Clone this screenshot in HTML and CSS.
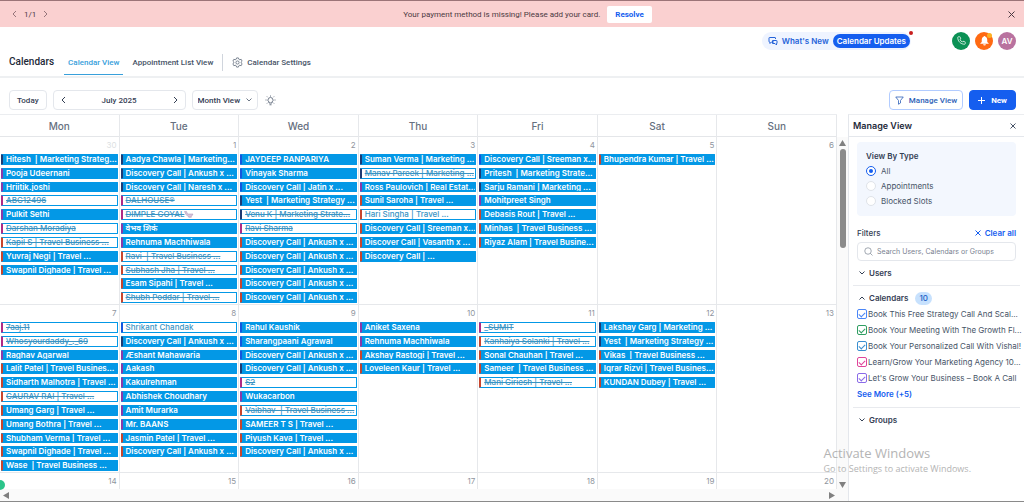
FILE: index.html
```html
<!DOCTYPE html>
<html lang="en">
<head>
<meta charset="UTF-8">
<meta name="viewport" content="width=device-width, initial-scale=1.0">
<title>Calendars</title>
<link rel="stylesheet" href="styles.css">
</head>
<body>

<div class="banner">
    <div class="banner-pager">
        <button aria-label="Previous"><svg width="5" height="8" viewBox="0 0 5 8"><path d="M4 1 1 4l3 3"/></svg></button>
        <span>1/1</span>
        <button aria-label="Next"><svg width="5" height="8" viewBox="0 0 5 8"><path d="M1 1l3 3-3 3"/></svg></button>
    </div>
    <div class="banner-message">
        <span>Your payment method is missing! Please add your card.</span>
        <button class="resolve">Resolve</button>
    </div>
    <button class="banner-close" aria-label="Close"><svg width="7" height="7" viewBox="0 0 7 7"><path d="M.5.5l6 6M6.5.5l-6 6"/></svg></button>
</div>

<header class="header">
    <div class="topbar">
        <div class="whats-new">
            <svg width="10" height="10" viewBox="0 0 20 20"><path d="M12 12H7l-3 3v-3H3a1 1 0 0 1-1-1V4a1 1 0 0 1 1-1h11a1 1 0 0 1 1 1v2M9 9h8a1 1 0 0 1 1 1v5h-1v3l-3-3H9z"/></svg>
            <a href="#">What's New</a>
            <a href="#" class="updates">Calendar Updates<span class="dot"></span></a>
        </div>
        <button class="round phone" aria-label="Call"><svg width="9" height="9" viewBox="0 0 24 24"><path d="M22 17v3a2 2 0 0 1-2 2C10 22 2 14 2 4a2 2 0 0 1 2-2h3a2 2 0 0 1 2 2l1 4-2 2a16 16 0 0 0 6 6l2-2 4 1a2 2 0 0 1 2 2z"/></svg></button>
        <button class="round bell" aria-label="Notifications"><svg width="11" height="11" viewBox="0 0 24 24"><path d="M12 2a2 2 0 0 0-2 2c-3 1-4 4-4 7v4l-3 3v1h18v-1l-3-3v-4c0-3-1-6-4-7a2 2 0 0 0-2-2zM9 20a3 3 0 0 0 6 0z"/></svg><span class="bell-dot"></span></button>
        <button class="round avatar">AV</button>
    </div>
    <nav class="tabs">
        <h1>Calendars</h1>
        <a href="#" class="tab active">Calendar View</a>
        <a href="#" class="tab">Appointment List View</a>
        <a href="#" class="settings"><svg width="11" height="11" viewBox="0 0 24 24"><path d="M10 2h4l1 3 2 1 3-1 2 4-2 2v2l2 2-2 4-3-1-2 1-1 3h-4l-1-3-2-1-3 1-2-4 2-2v-2L2 9l2-4 3 1 2-1z"/><circle cx="12" cy="12" r="3.5"/></svg>Calendar Settings</a>
    </nav>
</header>

<div class="toolbar">
    <button class="btn today">Today</button>
    <div class="btn month-nav">
        <button aria-label="Previous month"><svg width="5" height="8" viewBox="0 0 5 8"><path d="M4 1 1 4l3 3"/></svg></button>
        <span>July 2025</span>
        <button aria-label="Next month"><svg width="5" height="8" viewBox="0 0 5 8"><path d="M1 1l3 3-3 3"/></svg></button>
    </div>
    <div class="select">
        <select class="btn" aria-label="View"><option>Month View</option><option>Week View</option><option>Day View</option></select>
        <svg width="6" height="4" viewBox="0 0 6 4"><path d="M.5.5 3 3 5.5.5"/></svg>
    </div>
    <button class="tips" aria-label="Tips"><svg width="11" height="11" viewBox="0 0 22 22"><path d="M8 16v-2a5 5 0 1 1 6 0v2zM9 19.500h4M11 1v2M1 10h2M19 10h2M4 3l1.500 1.500M18 3l-1.500 1.500M4 17l1.500-1.500M18 17l-1.500-1.500"/></svg></button>
    <button class="btn manage"><svg width="9" height="9" viewBox="0 0 18 18"><path d="M1.500 2h15l-5.500 7v5l-4 2.500V9z"/></svg>Manage View</button>
    <button class="btn new"><svg width="7" height="7" viewBox="0 0 7 7"><path d="M3.500 0v7M0 3.500h7"/></svg>New</button>
</div>

<div class="content">
    <main class="calendar">
        <div class="week-head">
            <div>Mon</div><div>Tue</div><div>Wed</div><div>Thu</div><div>Fri</div><div>Sat</div><div>Sun</div>
        </div>
        <div class="month">
            <div class="weeks">
                <div class="day other">
                    <span class="date">30</span>
                    <div class="events">
                        <a href="#" class="event navy">Hitesh  | Marketing Strateg...</a>
                        <a href="#" class="event purple">Pooja Udeernani</a>
                        <a href="#" class="event purple">Hriitik.joshi</a>
                        <a href="#" class="event pink cancelled">ABC12496</a>
                        <a href="#" class="event purple">Pulkit Sethi</a>
                        <a href="#" class="event pink cancelled">Darshan Moradiya</a>
                        <a href="#" class="event red cancelled">Kapil S | Travel Business ...</a>
                        <a href="#" class="event red">Yuvraj Negi | Travel ...</a>
                        <a href="#" class="event red">Swapnil Dighade | Travel ...</a>
                    </div>
                </div>
                <div class="day">
                    <span class="date">1</span>
                    <div class="events">
                        <a href="#" class="event navy">Aadya Chawla | Marketing...</a>
                        <a href="#" class="event navy">Discovery Call | Ankush x ...</a>
                        <a href="#" class="event navy">Discovery Call | Naresh x ...</a>
                        <a href="#" class="event pink cancelled">DALHOUSE®</a>
                        <a href="#" class="event pink cancelled">DIMPLE GOYAL<svg class="bird" width="10" height="8" viewBox="0 0 20 16"><path d="M1 3h4l2 5h11l-3 5H8L4 9zM9 15h6"/></svg></a>
                        <a href="#" class="event purple">वेभव शिर्के</a>
                        <a href="#" class="event purple">Rehnuma Machhiwala</a>
                        <a href="#" class="event red cancelled">Ravi  | Travel Business ...</a>
                        <a href="#" class="event red cancelled">Subhash Jha | Travel ...</a>
                        <a href="#" class="event red">Esam Sipahi | Travel ...</a>
                        <a href="#" class="event red cancelled">Shubh Poddar | Travel ...</a>
                    </div>
                </div>
                <div class="day">
                    <span class="date">2</span>
                    <div class="events">
                        <a href="#" class="event blue">JAYDEEP RANPARIYA</a>
                        <a href="#" class="event blue">Vinayak Sharma</a>
                        <a href="#" class="event blue">Discovery Call | Jatin x ...</a>
                        <a href="#" class="event navy">Yest  | Marketing Strategy ...</a>
                        <a href="#" class="event navy cancelled">Venu K | Marketing Strate...</a>
                        <a href="#" class="event pink cancelled">Ravi Sharma</a>
                        <a href="#" class="event red">Discovery Call | Ankush x ...</a>
                        <a href="#" class="event red">Discovery Call | Ankush x ...</a>
                        <a href="#" class="event red">Discovery Call | Ankush x ...</a>
                        <a href="#" class="event red">Discovery Call | Ankush x ...</a>
                        <a href="#" class="event red">Discovery Call | Ankush x ...</a>
                    </div>
                </div>
                <div class="day">
                    <span class="date">3</span>
                    <div class="events">
                        <a href="#" class="event navy">Suman Verma | Marketing ...</a>
                        <a href="#" class="event navy cancelled">Manav Pareek | Marketing ...</a>
                        <a href="#" class="event purple">Ross Paulovich | Real Estat...</a>
                        <a href="#" class="event red">Sunil Saroha | Travel ...</a>
                        <a href="#" class="event red pending">Hari Singha | Travel ...</a>
                        <a href="#" class="event red">Discovery Call | Sreeman x...</a>
                        <a href="#" class="event red">Discover Call | Vasanth x ...</a>
                        <a href="#" class="event red">Discovery Call | ...</a>
                    </div>
                </div>
                <div class="day">
                    <span class="date">4</span>
                    <div class="events">
                        <a href="#" class="event blue">Discovery Call | Sreeman x...</a>
                        <a href="#" class="event navy">Pritesh  | Marketing Strate...</a>
                        <a href="#" class="event navy">Sarju Ramani | Marketing ...</a>
                        <a href="#" class="event purple">Mohitpreet Singh</a>
                        <a href="#" class="event red">Debasis Rout | Travel ...</a>
                        <a href="#" class="event red">Minhas  | Travel Business ...</a>
                        <a href="#" class="event red">Riyaz Alam | Travel Busine...</a>
                    </div>
                </div>
                <div class="day">
                    <span class="date">5</span>
                    <div class="events">
                        <a href="#" class="event red">Bhupendra Kumar | Travel ...</a>
                    </div>
                </div>
                <div class="day"><span class="date">6</span></div>

                <div class="day">
                    <span class="date">7</span>
                    <div class="events">
                        <a href="#" class="event pink cancelled">7aaj.11</a>
                        <a href="#" class="event pink cancelled">Whosyourdaddy_._69</a>
                        <a href="#" class="event purple">Raghav Agarwal</a>
                        <a href="#" class="event red">Lalit Patel | Travel Busines...</a>
                        <a href="#" class="event red">Sidharth Malhotra | Travel ...</a>
                        <a href="#" class="event red cancelled">GAURAV RAI | Travel ...</a>
                        <a href="#" class="event red">Umang Garg | Travel ...</a>
                        <a href="#" class="event red">Umang Bothra | Travel ...</a>
                        <a href="#" class="event red">Shubham Verma | Travel ...</a>
                        <a href="#" class="event red">Swapnil Dighade | Travel ...</a>
                        <a href="#" class="event red">Wase  | Travel Business ...</a>
                    </div>
                </div>
                <div class="day">
                    <span class="date">8</span>
                    <div class="events">
                        <a href="#" class="event blue pending">Shrikant Chandak</a>
                        <a href="#" class="event navy">Discovery Call | Ankush x ...</a>
                        <a href="#" class="event purple">Æshant Mahawaria</a>
                        <a href="#" class="event purple">Aakash</a>
                        <a href="#" class="event purple">Kakulrehman</a>
                        <a href="#" class="event purple">Abhishek Choudhary</a>
                        <a href="#" class="event purple">Amit Murarka</a>
                        <a href="#" class="event purple">Mr. BAANS</a>
                        <a href="#" class="event red">Jasmin Patel | Travel ...</a>
                        <a href="#" class="event red">Discovery Call | Ankush x ...</a>
                    </div>
                </div>
                <div class="day">
                    <span class="date">9</span>
                    <div class="events">
                        <a href="#" class="event blue">Rahul Kaushik</a>
                        <a href="#" class="event blue">Sharangpaani Agrawal</a>
                        <a href="#" class="event blue">Discovery Call | Ankush x ...</a>
                        <a href="#" class="event navy">Discovery Call | Ankush x ...</a>
                        <a href="#" class="event pink cancelled">S2</a>
                        <a href="#" class="event purple">Wukacarbon</a>
                        <a href="#" class="event red cancelled">Vaibhav  | Travel Business ...</a>
                        <a href="#" class="event red">SAMEER T S | Travel ...</a>
                        <a href="#" class="event red">Piyush Kava | Travel ...</a>
                        <a href="#" class="event red">Discovery Call | Ankush x ...</a>
                    </div>
                </div>
                <div class="day">
                    <span class="date">10</span>
                    <div class="events">
                        <a href="#" class="event purple">Aniket Saxena</a>
                        <a href="#" class="event purple">Rehnuma Machhiwala</a>
                        <a href="#" class="event red">Akshay Rastogi | Travel ...</a>
                        <a href="#" class="event red">Loveleen Kaur | Travel ...</a>
                    </div>
                </div>
                <div class="day">
                    <span class="date">11</span>
                    <div class="events">
                        <a href="#" class="event pink cancelled">_SUMIT</a>
                        <a href="#" class="event red cancelled">Kanhaiya Solanki | Travel ...</a>
                        <a href="#" class="event red">Sonal Chauhan | Travel ...</a>
                        <a href="#" class="event red">Sameer  | Travel Business ...</a>
                        <a href="#" class="event red cancelled">Mani Giriesh | Travel ...</a>
                    </div>
                </div>
                <div class="day">
                    <span class="date">12</span>
                    <div class="events">
                        <a href="#" class="event navy">Lakshay Garg | Marketing ...</a>
                        <a href="#" class="event navy">Yest  | Marketing Strategy ...</a>
                        <a href="#" class="event red">Vikas  | Travel Business ...</a>
                        <a href="#" class="event red">Iqrar Rizvi | Travel Busines...</a>
                        <a href="#" class="event red">KUNDAN Dubey | Travel ...</a>
                    </div>
                </div>
                <div class="day"><span class="date">13</span></div>

                <div class="day"><span class="date">14</span></div>
                <div class="day"><span class="date">15</span></div>
                <div class="day"><span class="date">16</span></div>
                <div class="day"><span class="date">17</span></div>
                <div class="day"><span class="date">18</span></div>
                <div class="day"><span class="date">19</span></div>
                <div class="day"><span class="date">20</span></div>
            </div>
            <div class="scroll-y">
                <svg width="7" height="6" viewBox="0 0 7 6"><path d="M3.500 0 7 6H0z"/></svg>
                <div class="thumb"></div>
                <svg width="7" height="6" viewBox="0 0 7 6"><path d="M0 0h7L3.500 6z"/></svg>
            </div>
        </div>
        <div class="scroll-x">
            <svg width="6" height="7" viewBox="0 0 6 7"><path d="M6 0v7L0 3.500z"/></svg>
            <svg width="6" height="7" viewBox="0 0 6 7"><path d="M0 0v7l6-3.500z"/></svg>
        </div>
    </main>

    <aside class="panel">
        <div class="panel-head">
            <h2>Manage View</h2>
            <button aria-label="Close panel"><svg width="6" height="6" viewBox="0 0 6 6"><path d="M.5.5l5 5M5.500.5l-5 5"/></svg></button>
        </div>
        <fieldset class="view-type">
            <legend>View By Type</legend>
            <label><input type="radio" name="type" checked>All</label>
            <label><input type="radio" name="type">Appointments</label>
            <label><input type="radio" name="type">Blocked Slots</label>
        </fieldset>
        <div class="filters-head">
            <h3>Filters</h3>
            <button><svg width="6" height="6" viewBox="0 0 6 6"><path d="M.5.5l5 5M5.500.5l-5 5"/></svg>Clear all</button>
        </div>
        <div class="search">
            <svg width="9" height="9" viewBox="0 0 18 18"><circle cx="8" cy="8" r="6.500"/><path d="M13 13l4 4"/></svg>
            <input type="text" aria-label="Search" placeholder="Search Users, Calendars or Groups">
        </div>
        <section class="group">
            <button class="group-head"><svg width="6" height="4" viewBox="0 0 6 4"><path d="M.5.5 3 3 5.500.5"/></svg>Users</button>
        </section>
        <section class="group calendars">
            <button class="group-head"><svg width="6" height="4" viewBox="0 0 6 4"><path d="M.5 3.500 3 1l2.500 2.500"/></svg>Calendars<span class="count">10</span></button>
            <label><input type="checkbox" class="c-blue" checked><span>Book This Free Strategy Call And Scal...</span></label>
            <label><input type="checkbox" class="c-green" checked><span>Book Your Meeting With The Growth Fl...</span></label>
            <label><input type="checkbox" class="c-sky" checked><span>Book Your Personalized Call With Vishal!</span></label>
            <label><input type="checkbox" class="c-pink" checked><span>Learn/Grow Your Marketing Agency 10...</span></label>
            <label><input type="checkbox" class="c-violet" checked><span>Let's Grow Your Business – Book A Call</span></label>
            <a href="#">See More (+5)</a>
        </section>
        <section class="group">
            <button class="group-head"><svg width="6" height="4" viewBox="0 0 6 4"><path d="M.5.5 3 3 5.500.5"/></svg>Groups</button>
        </section>
    </aside>
</div>

<span class="chat-dot"></span>
<div class="watermark">
    <strong>Activate Windows</strong>
    <span>Go to Settings to activate Windows.</span>
</div>

</body>
</html>
```
FILE: styles.css
```css
* {
    box-sizing: border-box;
}

body {
    margin: 0;
    height: 100vh;
    display: flex;
    flex-direction: column;
    overflow: hidden;
    position: relative;
    font-family: Inter, "Noto Sans", sans-serif;
    font-size: 8px;
    color: #475467;
    background-color: #fff;
    border-top: 1px solid #9c7478;
    border-bottom: 1px solid #8a8a8a;
}

button {
    font: inherit;
    color: inherit;
    background: none;
    border: none;
    padding: 0;
    display: flex;
    align-items: center;
    cursor: pointer;
}

a {
    color: inherit;
    text-decoration: none;
}

svg {
    fill: none;
    stroke: currentColor;
    flex: none;
}

h1, h2, h3 {
    margin: 0;
}

/* banner */
.banner {
    flex: none;
    display: grid;
    grid-template-columns: 1fr auto 1fr;
    align-items: center;
    height: 26px;
    padding: 0 9px 0 12px;
    background-color: #fad0d0;
    color: #4b3a42;
    font-family: Roboto, sans-serif;
    font-size: 8px;
}

.banner-pager,
.banner-message {
    display: flex;
    align-items: center;
    gap: 7px;
}

.banner-message {
    margin-left: 28px;
}

.banner-pager svg {
    color: #95757b;
}

.resolve {
    height: 17px;
    padding: 0 8px;
    border-radius: 2px;
    background-color: #fff;
    color: #155eef;
    font-weight: 700;
}

.banner-close {
    justify-self: end;
}

/* header */
.header {
    flex: none;
    border-bottom: 2px solid #eef0f2;
}

.topbar {
    display: flex;
    justify-content: flex-end;
    align-items: center;
    gap: 5px;
    height: 27px;
    padding-right: 8px;
}

.whats-new {
    display: flex;
    align-items: center;
    gap: 4px;
    height: 18px;
    margin-right: 36px;
    padding: 0 1px 0 6px;
    border-radius: 9px;
    background-color: #eff4ff;
    color: #2563d9;
    font-size: 8px;
    font-weight: 600;
}

.whats-new svg {
    stroke-width: 2;
}

.updates {
    position: relative;
    padding: 0 4px;
    line-height: 14px;
    border-radius: 7px;
    background-color: #155eef;
    color: #fff;
}

.dot {
    position: absolute;
    top: -3px;
    right: -3px;
    width: 4px;
    height: 4px;
    border-radius: 50%;
    background-color: #c81e1e;
}

.round {
    position: relative;
    justify-content: center;
    width: 18px;
    height: 18px;
    border-radius: 50%;
    color: #fff;
}

.phone {
    background-color: #0b9155;
}

.phone svg {
    stroke-width: 2;
}

.bell {
    background-color: #ff6a13;
}

.bell svg {
    fill: #fff;
    stroke: none;
}

.bell-dot {
    position: absolute;
    top: 1px;
    right: 1px;
    width: 5px;
    height: 5px;
    border-radius: 50%;
    background-color: #fdb022;
}

.avatar {
    background-color: #b9729f;
    font-size: 8px;
    font-weight: 600;
}

.tabs {
    display: flex;
    height: 22px;
    padding-left: 9px;
    font-family: Roboto, sans-serif;
    font-size: 8px;
    font-weight: 500;
    line-height: 17px;
}

.tabs h1 {
    margin-right: 10px;
    font-size: 10px;
    font-weight: 500;
    line-height: 16px;
    color: #1d2939;
}

.tab {
    height: 21px;
    padding: 0 4px;
    margin-right: 5px;
}

.tab.active {
    color: #38a0db;
    border-bottom: 1px solid #38a0db;
}

.settings {
    display: flex;
    align-items: center;
    gap: 4px;
    height: 17px;
    padding-left: 9px;
    border-left: 1px solid #d0d5dd;
}

.settings svg {
    stroke-width: 1.5;
}

/* toolbar */
.toolbar {
    flex: none;
    display: flex;
    align-items: flex-start;
    gap: 6px;
    height: 36px;
    padding: 12px 8px 0 9px;
}

.toolbar > *,
.toolbar select {
    height: 20px;
}

.btn {
    display: flex;
    align-items: center;
    border: 1px solid #e4e7ec;
    border-radius: 4px;
    background-color: #fff;
    color: #344054;
    font-family: Roboto, sans-serif;
    font-size: 8px;
    font-weight: 500;
}

.today {
    padding: 0 7px;
}

.month-nav {
    justify-content: space-between;
    width: 133px;
    padding: 0 7px;
}

.select {
    position: relative;
}

.select select {
    appearance: none;
    width: 66px;
    padding: 0 0 0 5px;
}

.select svg {
    position: absolute;
    right: 6px;
    top: 8px;
    stroke-width: 0.8;
}

.tips {
    margin: 0 auto 0 1px;
}

.tips svg {
    stroke-width: 1.6;
}

.manage {
    gap: 5px;
    padding: 0 5px;
    border-color: #b2ccff;
    color: #2d5fb8;
}

.manage svg {
    stroke-width: 1.6;
}

.new {
    gap: 6px;
    padding: 0 8px;
    border-color: #155eef;
    background-color: #155eef;
    color: #fff;
    font-weight: 700;
}

/* calendar */
.content {
    flex: 1;
    display: flex;
    min-height: 0;
}

.calendar {
    flex: 1;
    display: flex;
    flex-direction: column;
    min-width: 0;
}

.week-head {
    flex: none;
    display: grid;
    grid-template-columns: repeat(7, 1fr);
    height: 23px;
    margin-right: 11px;
    border-top: 1px solid #ebedf0;
    border-bottom: 1px solid #e4e6e9;
    font-size: 10px;
    font-weight: 500;
    line-height: 22px;
    text-align: center;
    color: #667080;
}

.week-head div,
.day {
    border-right: 1px solid #e6e8eb;
}

.month {
    flex: 1;
    display: flex;
    min-height: 0;
}

.weeks {
    flex: 1;
    display: grid;
    grid-template-columns: repeat(7, minmax(0, 1fr));
    grid-auto-rows: 168px;
    overflow: hidden;
}

.day {
    padding: 0 1px;
    border-bottom: 1px solid #e6e8eb;
}

.date {
    display: block;
    height: 17px;
    padding-right: 1px;
    font-size: 8px;
    line-height: 17px;
    text-align: right;
    color: #8f959e;
}

.other .date {
    color: #dcdfe3;
}

.events {
    display: grid;
    grid-template-rows: repeat(11, 1fr);
    gap: 3px;
    height: 149px;
}

.event {
    min-height: 0;
    padding-left: 3px;
    border: 1px solid #0398e6;
    border-left: 2px solid #1e3a8a;
    border-radius: 1px;
    background-color: #0398e6;
    color: #fff;
    font-size: 8px;
    font-weight: 600;
    line-height: 9px;
    white-space: pre;
    overflow: hidden;
}

.event.navy { border-left-color: #1f3b73; }
.event.blue { border-left-color: #1556dd; }
.event.purple { border-left-color: #8a3aa8; }
.event.pink { border-left-color: #b02a85; }
.event.red { border-left-color: #c8452d; }

.cancelled,
.pending {
    background-color: #fff;
    color: #3a94c4;
    font-weight: 500;
}

.cancelled {
    text-decoration: line-through;
}

.bird {
    vertical-align: top;
    color: #a58fae;
    fill: #d9c4dc;
}

.scroll-y {
    display: flex;
    flex-direction: column;
    align-items: center;
    gap: 3px;
    width: 11px;
    padding: 3px 0 1px;
    background-color: #fafafa;
}

.scroll-y svg,
.scroll-x svg {
    fill: #808080;
    stroke: none;
}

.thumb {
    width: 6px;
    height: 99px;
    margin-bottom: auto;
    border-radius: 3px;
    background-color: #8b8b8b;
}

.scroll-x {
    flex: none;
    display: flex;
    justify-content: space-between;
    align-items: center;
    height: 12px;
    padding: 0 13px 0 3px;
    background-color: #fafafa;
}

/* manage view panel */
.panel {
    flex: none;
    width: 176px;
    border-left: 1px solid #e4e7ec;
    border-top: 1px solid #ebedf0;
}

.panel-head,
.filters-head {
    display: flex;
    justify-content: space-between;
    align-items: center;
}

.panel-head {
    height: 22px;
    padding: 0 8px 0 4px;
    border-bottom: 1px solid #e4e7ec;
}

.panel-head h2 {
    font-size: 9px;
    font-weight: 600;
    color: #1d2939;
}

.view-type {
    display: flex;
    flex-direction: column;
    gap: 3px;
    margin: 5px 8px 0;
    padding: 9px;
    height: 74px;
    border: none;
    border-radius: 4px;
    background-color: #f3f7fe;
}

.view-type legend {
    float: left;
    padding: 0;
    font-weight: 600;
    line-height: 11px;
    color: #344054;
}

.view-type label,
.calendars label {
    display: flex;
    align-items: center;
    gap: 5px;
    line-height: 12px;
}

input[type="radio"],
input[type="checkbox"] {
    appearance: none;
    flex: none;
    display: flex;
    align-items: center;
    justify-content: center;
    width: 10px;
    height: 10px;
    margin: 0;
    border: 1px solid #dfe3e9;
    border-radius: 50%;
    background-color: #fff;
}

input[type="radio"]:checked {
    border-color: #155eef;
}

input[type="radio"]:checked::after {
    content: "";
    width: 4px;
    height: 4px;
    border-radius: 50%;
    background-color: #155eef;
}

.filters-head {
    height: 12px;
    margin: 11px 8px 0;
    font-weight: 600;
}

.filters-head h3 {
    font-size: 8px;
    font-weight: 500;
    color: #344054;
}

.filters-head button {
    gap: 4px;
    color: #155eef;
}

.search {
    display: flex;
    align-items: center;
    gap: 4px;
    height: 19px;
    margin: 3px 8px 0;
    padding: 0 6px;
    border: 1px solid #e4e7ec;
    border-radius: 4px;
    font-size: 7px;
}

.search input {
    flex: 1;
    min-width: 0;
    padding: 0;
    border: none;
    outline: none;
    font: inherit;
}

.search input::placeholder {
    color: #7a8291;
}

.group {
    margin: 0 4px;
    padding: 5px 4px 0;
    height: 25px;
    border-bottom: 1px solid #e8eaee;
}

.group:last-child {
    border-bottom: none;
}

.group-head {
    gap: 4px;
    height: 14px;
    padding-left: 2px;
    font-weight: 600;
    color: #344054;
}

.count {
    margin-left: 3px;
    padding: 0 4px;
    border-radius: 7px;
    background-color: #c7e1fd;
    color: #1d5fc4;
    font-weight: 500;
    line-height: 13px;
}

.calendars {
    height: auto;
    padding-bottom: 5px;
}

.calendars label {
    gap: 1px;
    height: 16px;
}

.group-head + label {
    margin-top: 1px;
}

.calendars label span {
    white-space: nowrap;
}

.calendars a {
    display: block;
    line-height: 16px;
    font-weight: 600;
    color: #155eef;
}

input[type="checkbox"] {
    border: 1px solid currentColor;
    border-radius: 2px;
}

input[type="checkbox"]:checked::after {
    content: "";
    width: 3px;
    height: 5px;
    margin-bottom: 1px;
    border: solid currentColor;
    border-width: 0 1px 1px 0;
    transform: rotate(45deg);
}

.c-blue { color: #4a86f7; }
.c-green { color: #2f9e62; }
.c-sky { color: #3a8fd0; }
.c-pink { color: #e0459a; }
.c-violet { color: #8a6be8; }

/* things floating over the page */
.chat-dot {
    position: absolute;
    left: -5px;
    bottom: 11px;
    width: 10px;
    height: 10px;
    border-radius: 50%;
    background-color: #2bc48a;
}

.watermark {
    position: absolute;
    right: 53px;
    bottom: 25px;
    display: flex;
    flex-direction: column;
    font-family: "Open Sans", sans-serif;
    font-size: 9px;
    line-height: 14px;
    color: #b4b4b4;
    pointer-events: none;
}

.watermark strong {
    font-size: 13px;
    font-weight: 400;
    line-height: 18px;
}
```
